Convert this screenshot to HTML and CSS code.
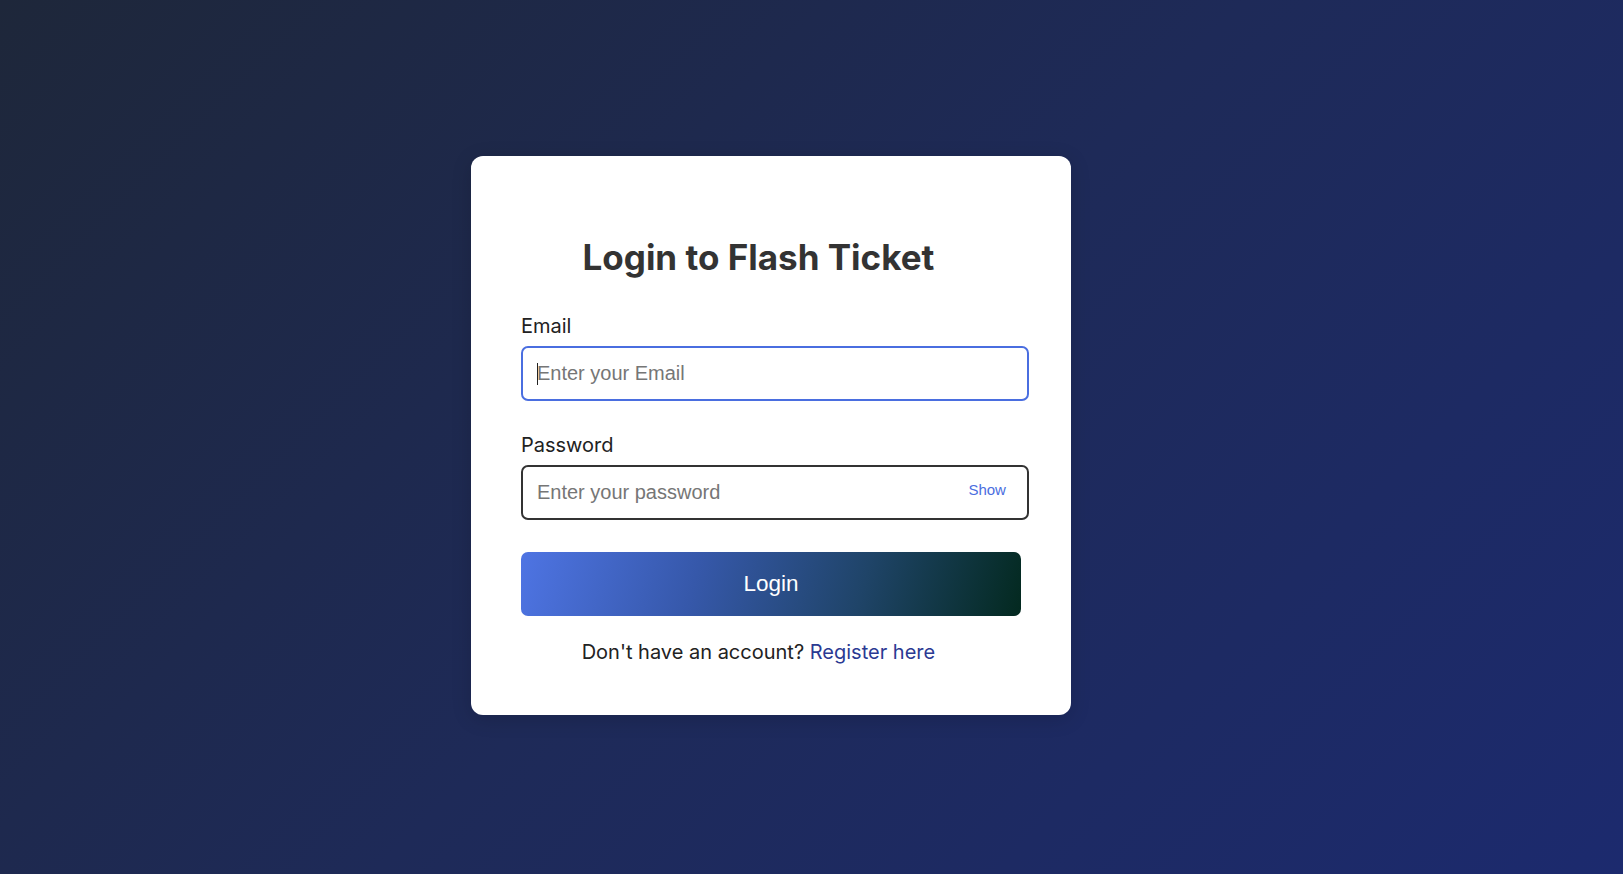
FILE: index.html
```html
<!DOCTYPE html>
<html lang="en">
<head>
<meta charset="utf-8">
<title>Login to Flash Ticket</title>
<link rel="stylesheet" href="styles.css">
</head>
<body>
<div class="page">
  <div class="card">
    <form class="form">
      <h2 class="title">Login to Flash Ticket</h2>
      <div class="group">
        <label class="label" for="email">Email</label>
        <div class="field field-focus">
          <span class="caret"></span>
          <input class="input" id="email" type="email" placeholder="Enter your Email">
        </div>
      </div>
      <div class="group">
        <label class="label" for="password">Password</label>
        <div class="field">
          <input class="input" id="password" type="password" placeholder="Enter your password">
          <span class="toggle">Show</span>
        </div>
      </div>
      <button class="btn" type="button">Login</button>
      <p class="footer">Don't have an account? <a class="link" href="#">Register here</a></p>
    </form>
  </div>
</div>
</body>
</html>
```

FILE: styles.css
```css
* { box-sizing: border-box; }
html, body { margin: 0; padding: 0; }
body {
  min-height: 100vh;
  font-family: Inter, "Noto Sans", sans-serif;
  background: linear-gradient(135deg, #1e273a 0%, #1e2a58 50%, #1c2a6e 100%);
  color: #333;
}
.page {
  width: 95%;
  min-height: 874px;
  padding-bottom: 3px;
  display: flex;
  align-items: center;
  justify-content: center;
}
.card {
  width: 600px;
  background: #fff;
  border-radius: 12px;
  padding: 50px 50px 51px;
  box-shadow: 0 4px 20px rgba(0, 0, 0, 0.15);
}
.form {
  width: 95%;
}
.title {
  margin: 30px 0 36px;
  text-align: center;
  font-size: 35px;
  font-weight: 700;
  color: #333;
  line-height: 42px;
}
.group {
  margin-bottom: 32px;
}
.label {
  display: block;
  font-size: 20px;
  line-height: 24px;
  color: #222;
  margin-bottom: 8px;
}
.field {
  position: relative;
  width: calc(100% + 33px);
  height: 55px;
  border: 2px solid #333;
  border-radius: 7px;
  display: flex;
  align-items: center;
  background: #fff;
}
.field-focus {
  border-color: #4a6ee0;
}
.input {
  flex: 1;
  min-width: 0;
  height: 100%;
  border: none;
  outline: none;
  background: transparent;
  padding: 0 14px 0 14px;
  font-family: "Liberation Sans", Arial, sans-serif;
  font-size: 20px;
  color: #333;
}
.input::placeholder {
  color: #767676;
}
.caret {
  position: absolute;
  left: 14px;
  top: 15px;
  width: 1px;
  height: 22px;
  background: #222;
}
.toggle {
  font-family: "Liberation Sans", Arial, sans-serif;
  font-size: 15px;
  color: #4a6ee0;
  margin-right: 21px;
  margin-top: -6px;
  cursor: pointer;
}
.btn {
  display: block;
  width: 500px;
  height: 64px;
  border: none;
  border-radius: 7px;
  background: linear-gradient(105deg, #4e74e3 0%, #3658aa 35%, #1f4468 68%, #03291f 100%);
  color: #fff;
  font-family: "Liberation Sans", Arial, sans-serif;
  font-size: 22.5px;
  cursor: pointer;
}
.footer {
  margin: 24px 0 0;
  text-align: center;
  font-size: 20px;
  line-height: 24px;
  color: #222;
}
.link {
  color: #2b3a93;
  text-decoration: none;
}
```
